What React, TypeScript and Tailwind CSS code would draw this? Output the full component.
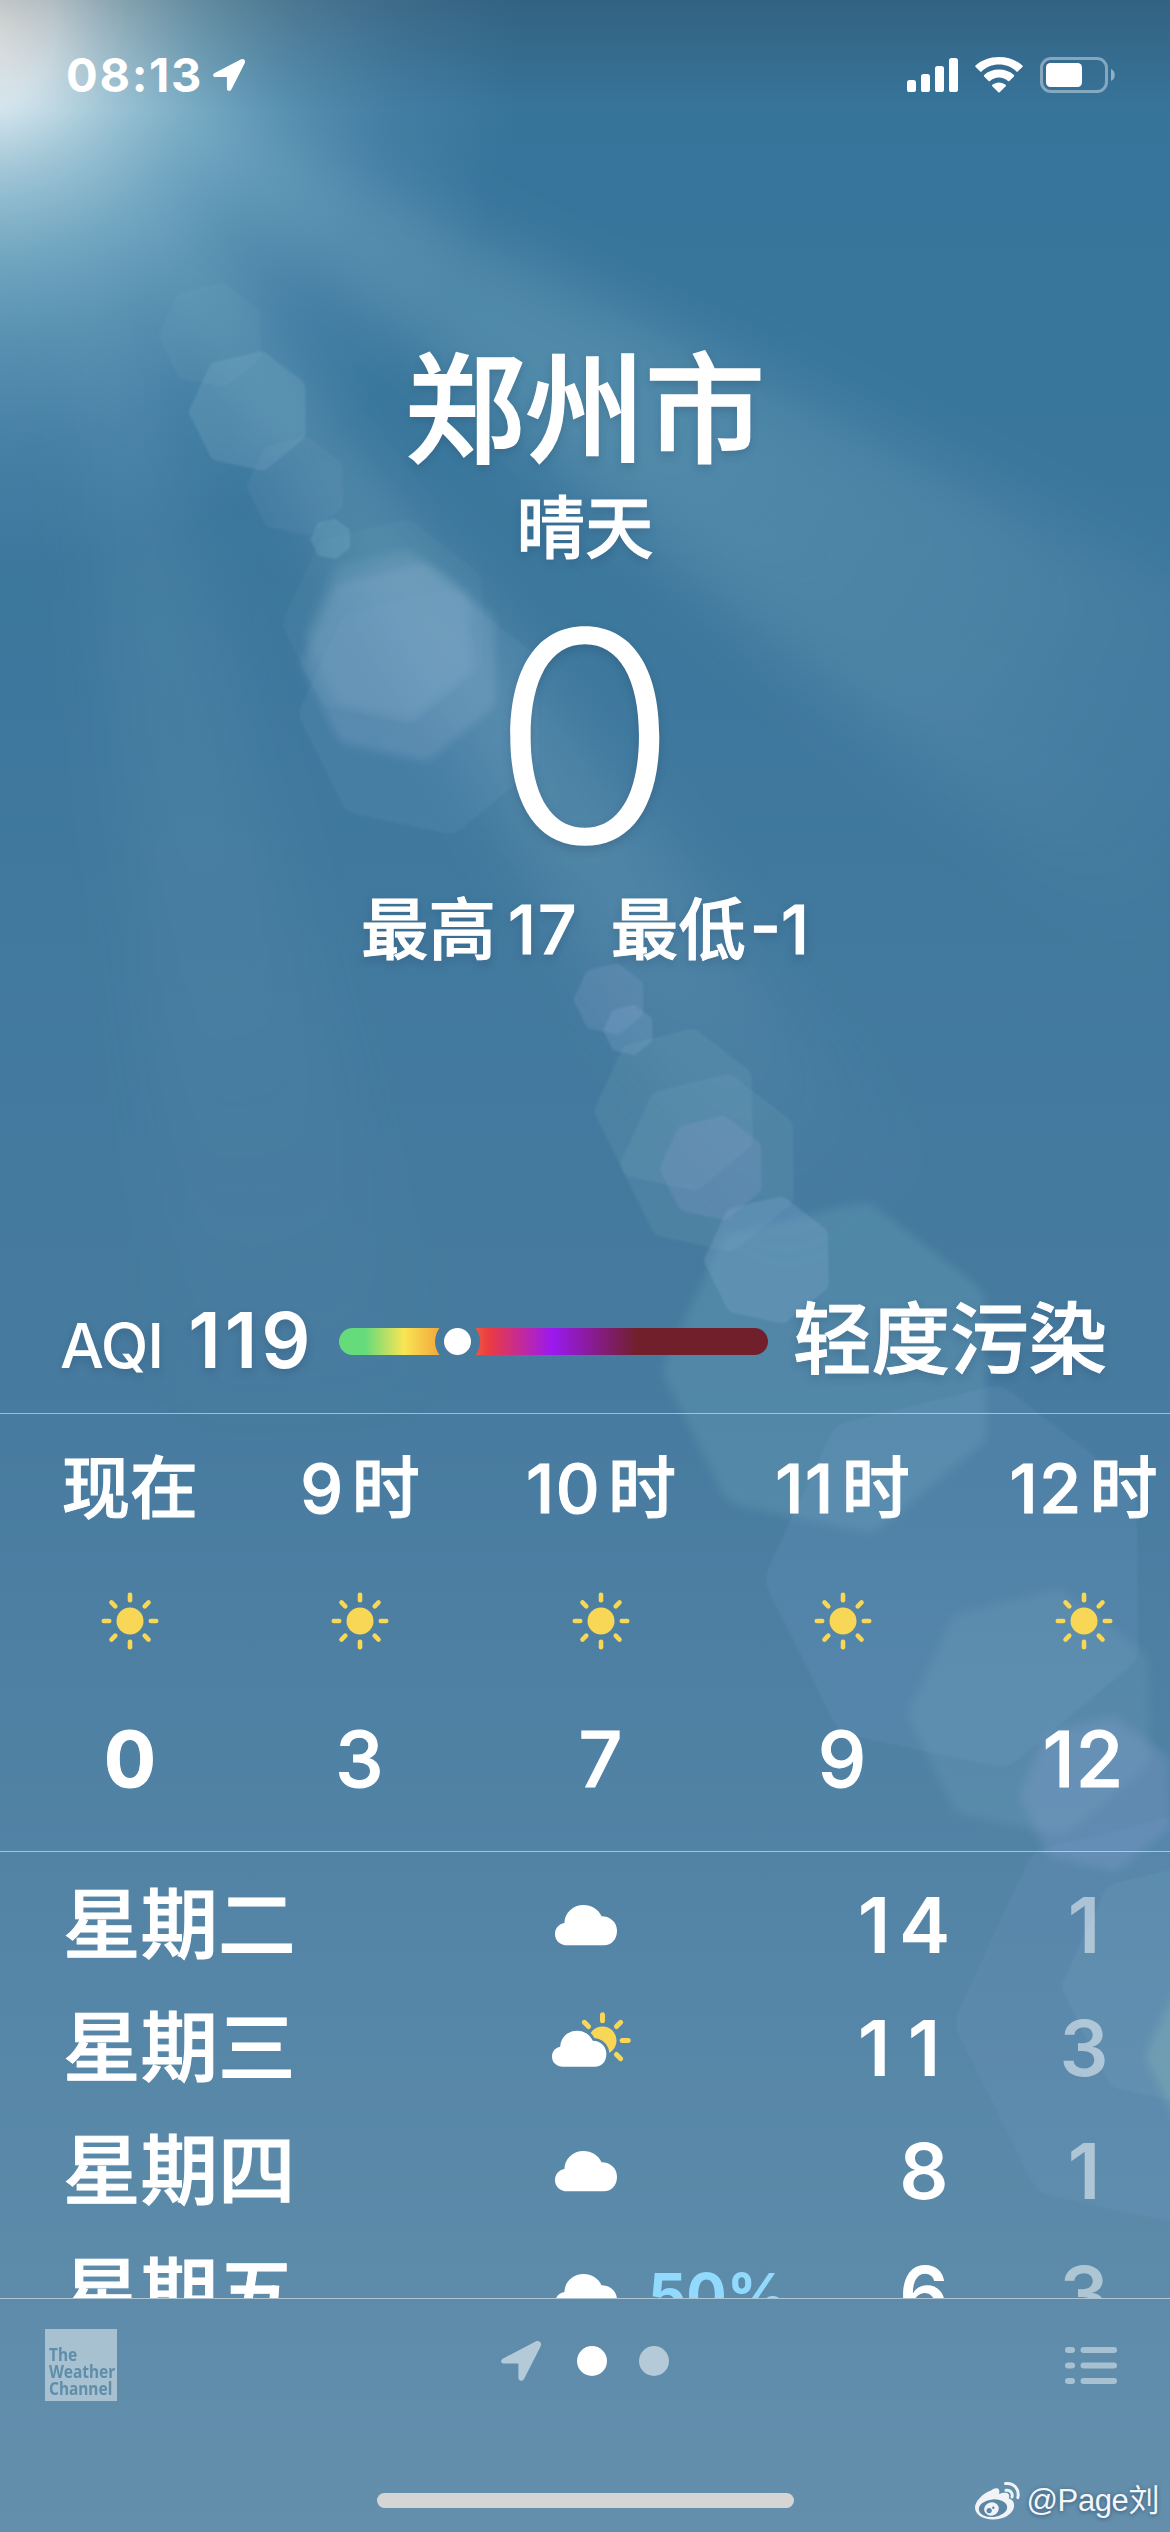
import type { ReactNode } from "react";

type Flare = {
  x: number;
  y: number;
  r: number;
  fill: string;
  opacity: number;
  blur?: boolean;
};

const flares: Flare[] = [
  { x: 212, y: 335, r: 54, fill: "#8cc0cc", opacity: 0.08 },
  { x: 250, y: 411, r: 62, fill: "#9cc6dc", opacity: 0.17 },
  { x: 297, y: 486, r: 51, fill: "#7fa6cc", opacity: 0.12 },
  { x: 331, y: 539, r: 21, fill: "#8cc0d8", opacity: 0.22 },
  { x: 387, y: 622, r: 106, fill: "#8cb8cc", opacity: 0.07 },
  { x: 391, y: 634, r: 88, fill: "#a0c4d8", opacity: 0.16, blur: true },
  { x: 403, y: 662, r: 103, fill: "#a0bedc", opacity: 0.22, blur: true },
  { x: 424, y: 712, r: 127, fill: "#7ea8d2", opacity: 0.12 },
  { x: 610, y: 999, r: 37, fill: "#93a9d6", opacity: 0.2 },
  { x: 629, y: 1030, r: 26, fill: "#8fb4dc", opacity: 0.22 },
  { x: 677, y: 1110, r: 84, fill: "#8cbcc8", opacity: 0.13 },
  { x: 711, y: 1163, r: 92, fill: "#8cbcc8", opacity: 0.12 },
  { x: 713, y: 1168, r: 54, fill: "#8f9fd4", opacity: 0.22 },
  { x: 769, y: 1260, r: 66, fill: "#84acd8", opacity: 0.27 },
  { x: 832, y: 1368, r: 172, fill: "#7fb8c8", opacity: 0.2, blur: true },
  { x: 960, y: 1577, r: 198, fill: "#7fa4d4", opacity: 0.14 },
  { x: 1034, y: 1712, r: 128, fill: "#84b4c8", opacity: 0.17, blur: true },
  { x: 1098, y: 1794, r: 80, fill: "#93a6d8", opacity: 0.24, blur: true },
  { x: 1172, y: 2020, r: 220, fill: "#84a6d8", opacity: 0.11 },
  { x: 1190, y: 1985, r: 130, fill: "#84b4c8", opacity: 0.13 },
  { x: 1248, y: 2055, r: 104, fill: "#a0d0c0", opacity: 0.22, blur: true },
];

// lens flares are seven-sided, all turned the same way
function heptagon(x: number, y: number, r: number) {
  return Array.from({ length: 7 }, (_, i) => {
    const a = ((i * 360) / 7 - 78) * (Math.PI / 180);
    return `${(x + r * Math.cos(a)).toFixed(1)},${(y + r * Math.sin(a)).toFixed(1)}`;
  }).join(" ");
}

function Sky() {
  return (
    <svg
      className="absolute inset-0 h-full w-full"
      viewBox="0 0 1170 2532"
      aria-hidden
    >
      <defs>
        <linearGradient id="sky" x1="0" y1="0" x2="0" y2="1">
          <stop offset="0" stopColor="#36739a" />
          <stop offset="0.14" stopColor="#39769c" />
          <stop offset="0.42" stopColor="#43799e" />
          <stop offset="0.56" stopColor="#477b9f" />
          <stop offset="0.75" stopColor="#5384a6" />
          <stop offset="0.92" stopColor="#5e8caa" />
          <stop offset="1" stopColor="#648fac" />
        </linearGradient>
        <linearGradient id="shade" x1="0" y1="0" x2="0" y2="1">
          <stop offset="0" stopColor="#282828" stopOpacity="0.22" />
          <stop offset="1" stopColor="#282828" stopOpacity="0" />
        </linearGradient>
        <radialGradient
          id="glow"
          gradientUnits="userSpaceOnUse"
          cx="-20"
          cy="30"
          r="540"
        >
          <stop offset="0" stopColor="#fdfbf8" stopOpacity="1" />
          <stop offset="0.14" stopColor="#e6f2f7" stopOpacity="0.92" />
          <stop offset="0.27" stopColor="#c0dee8" stopOpacity="0.76" />
          <stop offset="0.42" stopColor="#a0cede" stopOpacity="0.56" />
          <stop offset="0.58" stopColor="#90c0d8" stopOpacity="0.35" />
          <stop offset="0.78" stopColor="#84b4d4" stopOpacity="0.15" />
          <stop offset="1" stopColor="#84b4d4" stopOpacity="0" />
        </radialGradient>
        <radialGradient
          id="ray"
          gradientUnits="userSpaceOnUse"
          cx="0"
          cy="0"
          r="1500"
        >
          <stop offset="0" stopColor="#9ccbdc" stopOpacity="0.22" />
          <stop offset="0.5" stopColor="#8cbccc" stopOpacity="0.28" />
          <stop offset="0.75" stopColor="#8cb8cc" stopOpacity="0.18" />
          <stop offset="1" stopColor="#8cb4cc" stopOpacity="0" />
        </radialGradient>
        <filter id="soft" x="-20%" y="-20%" width="140%" height="140%">
          <feGaussianBlur stdDeviation="32" />
        </filter>
        <filter id="edge" x="-30%" y="-30%" width="160%" height="160%">
          <feGaussianBlur stdDeviation="5" />
        </filter>
        <filter id="fine" x="-30%" y="-30%" width="160%" height="160%">
          <feGaussianBlur stdDeviation="1.2" />
        </filter>
      </defs>
      <rect width="1170" height="2532" fill="url(#sky)" />
      <g filter="url(#soft)">
        <polygon points="0,0 1300,650 1300,1080" fill="url(#ray)" />
        <polygon points="0,0 800,1300 1000,1280" fill="url(#ray)" />
        <polygon points="40,0 430,1400 190,1400" fill="url(#ray)" opacity="0.35" />
      </g>
      <rect width="700" height="700" fill="url(#glow)" />
      {flares.map((f) => (
        <polygon
          key={`${f.x}-${f.y}`}
          points={heptagon(f.x, f.y, f.r * 0.84)}
          fill={f.fill}
          stroke={f.fill}
          strokeWidth={f.r * 0.28}
          strokeLinejoin="round"
          opacity={f.opacity}
          filter={f.blur ? "url(#edge)" : "url(#fine)"}
        />
      ))}
      <rect width="1170" height="110" fill="url(#shade)" />
    </svg>
  );
}

function LocationArrow({ className }: { className: string }) {
  return (
    <svg viewBox="0 0 40 40" className={className} fill="currentColor" aria-hidden>
      <path d="M34.6 0.6 2.2 17.4C-1 19-.2 22.6 3 22.6H17.4V36.6C17.4 40.6 21.8 41 23.3 37.4L39.6 5.4C41.2 1.6 38.2-1 34.6.6Z" />
    </svg>
  );
}

function StatusBar() {
  return (
    <header className="flex h-[149px] items-center justify-between pl-[66px] pr-[55px]">
      <div className="flex items-center">
        <span className="text-[47px] leading-none font-bold tracking-[1.7px]">
          08:13
        </span>
        <LocationArrow className="ml-[10px] h-[32px] w-[32px]" />
      </div>
      <div className="flex items-center">
        <svg className="h-[34px] w-[51px]" viewBox="0 0 51 34" fill="#fff">
          <rect y="22" width="9" height="12" rx="2.6" />
          <rect x="14" y="16" width="9" height="18" rx="2.6" />
          <rect x="28" y="8" width="9" height="26" rx="2.6" />
          <rect x="42" width="9" height="34" rx="2.6" />
        </svg>
        <svg className="ml-[17px] h-[36px] w-[48px]" viewBox="0 0 48 36" fill="#fff">
          <path d="M24 7.6c6.700 0 12.800 2.500 17.400 6.900.4.400 1 .4 1.400 0l4.600-4.500c.5-.4.500-1.100 0-1.500C41.300 3 33.100 0 24 0S6.700 3 .6 8.500c-.5.400-.5 1.100 0 1.500l4.600 4.500c.4.400 1 .4 1.400 0C11.200 10.100 17.300 7.600 24 7.600Z" />
          <path d="M24 20.400c3.500 0 6.600 1.300 9 3.500.4.400 1 .4 1.400 0l4.500-4.400c.4-.4.400-1 0-1.500C35 14.600 29.800 12.600 24 12.600S13 14.600 9.100 18c-.4.500-.4 1.100 0 1.500l4.500 4.400c.4.400 1 .4 1.400 0 2.400-2.200 5.500-3.500 9-3.500Z" />
          <path d="M30.700 29.300c.4-.4.400-1.100 0-1.500-1.900-1.500-4.200-2.400-6.700-2.400s-4.800.9-6.700 2.400c-.4.400-.4 1.100 0 1.500l6 6c.4.400 1 .4 1.400 0Z" />
        </svg>
        <svg className="ml-[17px] h-[36px] w-[75px]" viewBox="0 0 75 36">
          <rect
            x="1.5"
            y="1.5"
            width="65"
            height="33"
            rx="9.5"
            fill="none"
            stroke="#fff"
            strokeOpacity="0.4"
            strokeWidth="3"
          />
          <rect x="6" y="6" width="36" height="24" rx="4.5" fill="#fff" />
          <path d="M71 12c5 1.600 5 10.400 0 12Z" fill="#fff" fillOpacity="0.45" />
        </svg>
      </div>
    </header>
  );
}

function SunIcon() {
  return (
    <svg viewBox="0 0 58 58" className="h-[58px] w-[58px]" aria-hidden>
      <circle cx="29" cy="29" r="13.5" fill="#f8d756" />
      {[0, 45, 90, 135, 180, 225, 270, 315].map((deg) => (
        <rect
          key={deg}
          x="26.7"
          y="0.5"
          width="4.6"
          height="10"
          rx="2.3"
          fill="#f8d756"
          transform={`rotate(${deg} 29 29)`}
        />
      ))}
    </svg>
  );
}

const cloudPath =
  "M12.5 40.3H49C56.5 40.3 62 34.5 62 26 62 17.5 55.5 11.3 46.5 11.3 43.5 4.3 36.5 0 28.5 0 18 0 9.7 7.7 9.4 18 3.8 19 0 23.3 0 29.2 0 35.6 5.2 40.3 12.5 40.3Z";

function CloudIcon() {
  return (
    <svg viewBox="0 0 62 41" className="h-[41px] w-[62px]" aria-hidden>
      <path d={cloudPath} fill="#fff" />
    </svg>
  );
}

function PartlyCloudyIcon() {
  return (
    <svg viewBox="0 0 80 56" className="h-[56px] w-[80px]" aria-hidden>
      <mask id="behind-cloud">
        <rect width="80" height="56" fill="#fff" />
        <path
          d={cloudPath}
          fill="#000"
          stroke="#000"
          strokeWidth="6.5"
          transform="translate(0 18.7) scale(0.877 0.895)"
        />
      </mask>
      <circle cx="50.5" cy="28.5" r="14" fill="#f8d756" mask="url(#behind-cloud)" />
      {[-45, 0, 45, 90, 135].map((deg) => (
        <rect
          key={deg}
          x="48"
          y="0.3"
          width="5"
          height="11"
          rx="2.5"
          fill="#f8d756"
          transform={`rotate(${deg} 50.5 28.5)`}
        />
      ))}
      <path
        d={cloudPath}
        fill="#fff"
        transform="translate(0 18.7) scale(0.877 0.895)"
      />
    </svg>
  );
}

function AirQuality() {
  return (
    <section className="flex h-[146px] items-center pl-[60px] pr-[63px] [text-shadow:0_4px_8px_rgba(30,60,90,0.25)]">
      <div className="flex w-[279px] items-baseline">
        <span className="text-[62px] leading-none font-medium tracking-[-1px]">
          AQI
        </span>
        <span className="ml-[25px] text-[77px] leading-none font-semibold tracking-[4px]">
          119
        </span>
      </div>
      <svg className="mt-[3px] h-[27px] w-[429px]" viewBox="0 0 429 27" aria-hidden>
        <defs>
          <linearGradient id="aqi">
            <stop offset="0.06" stopColor="#65db7b" />
            <stop offset="0.151" stopColor="#f9e554" />
            <stop offset="0.235" stopColor="#f2a83b" />
            <stop offset="0.35" stopColor="#ea3b42" />
            <stop offset="0.497" stopColor="#9b19f0" />
            <stop offset="0.695" stopColor="#711f2b" />
          </linearGradient>
          <mask id="knob-gap">
            <rect width="429" height="27" fill="#fff" />
            <circle cx="118.5" cy="13.5" r="22.5" fill="#000" />
          </mask>
        </defs>
        <rect width="429" height="27" rx="13.5" fill="url(#aqi)" mask="url(#knob-gap)" />
        <circle cx="118.5" cy="13.5" r="13.5" fill="#fff" />
      </svg>
      <span className="ml-auto text-[78.5px] leading-none font-medium [-webkit-text-stroke:1px_white]">
        轻度污染
      </span>
    </section>
  );
}

const hours = [
  { hour: "", label: "现在", temp: "0", width: "w-[134px]" },
  { hour: "9", label: "时", temp: "3", width: "w-[134px]" },
  { hour: "10", label: "时", temp: "7", width: "w-[156px]" },
  { hour: "11", label: "时", temp: "9", width: "w-[135px]" },
  { hour: "12", label: "时", temp: "12", width: "w-[155px]" },
];

function Hourly() {
  return (
    <section className="flex h-[438px] gap-[96px] overflow-hidden border-t border-white/50 pl-[63px]">
      {hours.map((h) => (
        <div
          key={h.hour}
          className={`flex shrink-0 flex-col items-center whitespace-nowrap ${h.width}`}
        >
          <div className="mt-[38px] flex h-[72px] items-center gap-[7px] text-[68px] leading-[72px] font-medium [-webkit-text-stroke:1px_white]">
            {h.hour && <span className="tracking-[1.5px]">{h.hour}</span>}
            <span>{h.label}</span>
          </div>
          <div className="mt-[68px]">
            <SunIcon />
          </div>
          <div
            className={`mt-[70px] text-[77px] leading-[78px] ${
              h.hour
                ? "font-medium tracking-[1px] [-webkit-text-stroke:1px_white]"
                : "font-bold [-webkit-text-stroke:1px_white]"
            }`}
          >
            {h.temp}
          </div>
        </div>
      ))}
    </section>
  );
}

type Day = {
  name: string;
  icon: ReactNode;
  chance?: string;
  high: string;
  low: string;
};

const days: Day[] = [
  { name: "星期二", icon: <CloudIcon />, high: "14", low: "1" },
  { name: "星期三", icon: <PartlyCloudyIcon />, high: "11", low: "3" },
  { name: "星期四", icon: <CloudIcon />, high: "8", low: "1" },
  { name: "星期五", icon: <CloudIcon />, chance: "50%", high: "6", low: "3" },
];

// one cell per digit keeps the columns aligned without the slab-footed tabular 1
function Digits({ value }: { value: string }) {
  return (
    <span className="flex justify-end">
      {value.split("").map((c, i) => (
        <span key={i} className="w-[50px] text-center">
          {c}
        </span>
      ))}
    </span>
  );
}

function Daily() {
  return (
    <section className="h-[447px] overflow-hidden border-t border-white/50 pt-[12px]">
      {days.map((d) => (
        <div
          key={d.name}
          className="flex h-[123px] items-center pl-[63px] pr-[61px] text-[77px] leading-none"
        >
          <span className="w-[492px] text-[77.5px] font-medium [-webkit-text-stroke:1px_white]">
            {d.name}
          </span>
          <span
            className={`flex w-[96px] ${d.name === "星期三" ? "-ml-[3px] mr-[3px] -mt-[18px]" : ""}`}
          >
            {d.icon}
          </span>
          <span className="-ml-[3px] w-[143px] text-[60px] font-bold text-[#92dafd]">
            {d.chance}
          </span>
          <span className="w-[158px] font-semibold">
            <Digits value={d.high} />
          </span>
          <span className="ml-auto font-semibold text-white/50">
            <Digits value={d.low} />
          </span>
        </div>
      ))}
    </section>
  );
}

function ListIcon() {
  return (
    <svg viewBox="0 0 52 37" className="h-[37px] w-[52px]" fill="#a7c1d2" aria-hidden>
      {[0, 15.5, 31].map((y) => (
        <g key={y}>
          <rect y={y} width="10" height="6" rx="3" />
          <rect x="15.5" y={y} width="36.5" height="6" rx="3" />
        </g>
      ))}
    </svg>
  );
}

function WeiboMark() {
  return (
    <svg viewBox="0 0 48 40" className="h-[40px] w-[48px]" aria-hidden>
      <path
        d="M17 9.500c5-3.800 9.800-2.600 8 3.500 6.600-2.700 11.800-1.500 9.700 4.500 4 1.300 6 4.200 5.300 8.400-1.200 7-10.200 12.600-21 12.600C8.500 38.500 1 33.500 1 26.500 1 20.500 8.500 12.500 17 9.500Z"
        fill="#f1f4f7"
      />
      <ellipse cx="19" cy="27.2" rx="14.2" ry="8.8" fill="#5b87a5" transform="rotate(-6 19 27.2)" />
      <ellipse cx="17.5" cy="28" rx="7.4" ry="6.6" fill="#f1f4f7" transform="rotate(-18 17.5 28)" />
      <circle cx="15.2" cy="29.6" r="2.6" fill="#5b87a5" />
      <circle cx="19.3" cy="26.8" r="1.2" fill="#5b87a5" />
      <path
        d="M31.500 2.600c8.200-1 14.300 5.600 12.300 14M32 9.300c4.300-.6 7 2.600 6 6.700"
        fill="none"
        stroke="#f1f4f7"
        strokeWidth="3"
        strokeLinecap="round"
      />
    </svg>
  );
}

function BottomBar() {
  return (
    <footer className="flex flex-1 flex-col border-t border-white/50">
      <div className="mt-[30px] flex h-[72px] items-center pl-[45px] pr-[53px]">
        <div className="h-[72px] w-[72px] bg-[#a7c1d1] pt-[17px] pl-[4px] font-['Noto_Sans',sans-serif] text-[18px] leading-[17px] font-bold text-[#5f8eab]">
          <div className="w-[76px] origin-left scale-x-[0.86]">
            <div>The</div>
            <div>Weather</div>
            <div>Channel</div>
          </div>
        </div>
        <div className="ml-[384px] flex items-center text-[#b4cad8]">
          <LocationArrow className="mt-[-8px] h-[40px] w-[40px]" />
          <span className="ml-[36px] mt-[-8px] h-[30px] w-[30px] rounded-full bg-white" />
          <span className="ml-[32px] mt-[-8px] h-[30px] w-[30px] rounded-full bg-[#b4cad8]" />
        </div>
        <div className="ml-auto">
          <ListIcon />
        </div>
      </div>
      <div className="mt-[92px] h-[15px] w-[417px] self-center rounded-full bg-[#d5d5d5]" />
    </footer>
  );
}

export default function App() {
  return (
    <main className="relative flex h-[2532px] w-[1170px] flex-col overflow-hidden bg-[#43799e] font-['Inter','Noto_Sans_CJK_SC',sans-serif] text-white">
      <Sky />
      <div className="relative flex flex-1 flex-col">
        <StatusBar />
        <section className="flex h-[1118px] flex-col items-center [text-shadow:0_4px_8px_rgba(30,60,90,0.25)]">
          <h1 className="mt-[197px] text-[120px] leading-[130px] font-medium [-webkit-text-stroke:1.5px_white]">
            郑州市
          </h1>
          <p className="mt-[17px] text-[68.5px] leading-[72px] font-medium [-webkit-text-stroke:1px_white]">
            晴天
          </p>
          <p className="mt-[24px] scale-x-[1.035] text-[294px] leading-[294px] font-light">
            0
          </p>
          <p className="mt-[11px] flex text-[67.5px] leading-[72px] font-medium [-webkit-text-stroke:1px_white]">
            最高<span className="ml-[12px] tracking-[2px]">17</span>
            <span className="ml-[32px]">最低</span>
            <span className="ml-[4px]">-1</span>
          </p>
        </section>
        <AirQuality />
        <Hourly />
        <Daily />
        <BottomBar />
      </div>
      <div className="absolute right-[11px] bottom-[11px] flex items-center gap-[5px] font-['Liberation_Sans','Noto_Sans_CJK_SC',sans-serif] text-[31px] leading-[40px] tracking-[-0.4px] text-[#f4f7f9] [text-shadow:0_1px_4px_rgba(20,50,80,0.6)]">
        <WeiboMark />
        <span>@Page刘</span>
      </div>
    </main>
  );
}
